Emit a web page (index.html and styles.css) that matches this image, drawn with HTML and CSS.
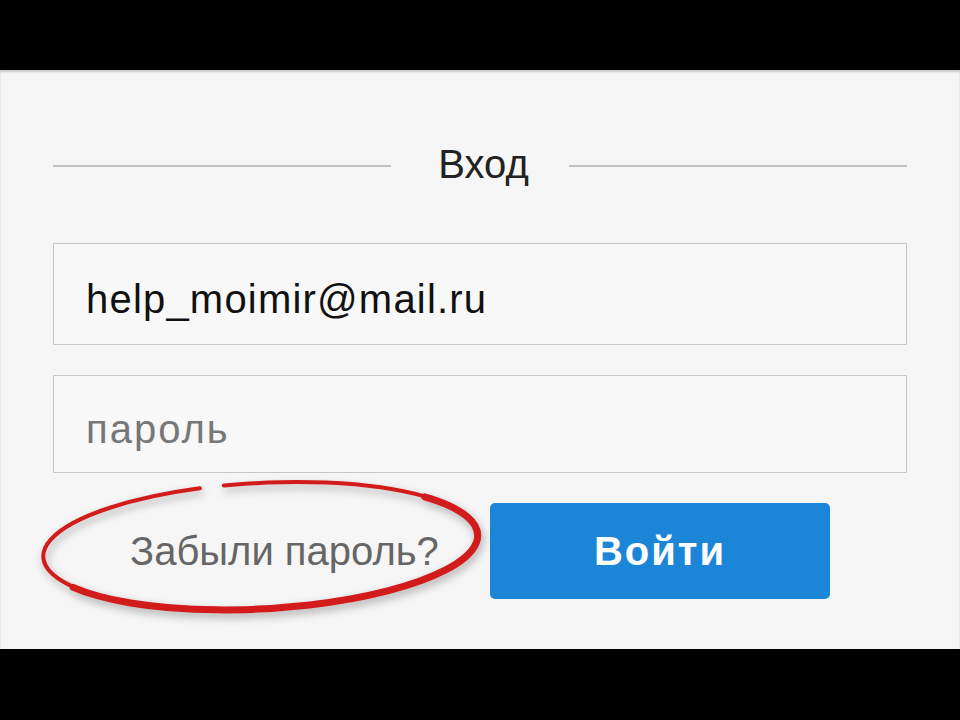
FILE: index.html
```html
<!DOCTYPE html>
<html lang="ru">

<head>
    <meta charset="utf-8">
    <link rel="stylesheet" href="styles.css">
</head>

<body>
    <div class="letterbox"></div>
    <main class="panel">
        <!-- Title with lines on both sides -->
        <div class="title-row">
            <span class="title-line"></span>
            <h1 class="title">Вход</h1>
            <span class="title-line"></span>
        </div>
        <form class="login-form">
            <input class="field field-mail" type="text" value="help_moimir@mail.ru" />
            <input class="field field-pass" type="password" placeholder="пароль" />
            <div class="actions">
                <div class="forgot">
                    <a class="forgot-link" href="#">Забыли пароль?</a>
                    <!-- red marker circle drawn over the link -->
                    <svg class="marker" width="470" height="160" viewBox="0 0 470 160">
                        <g transform="rotate(-3 230 76)" fill="none" stroke="#d21c1c" stroke-linecap="round">
                            <path d="M 197 13.7 A 218 63 0 1 1 173 15.2" stroke-width="4" />
                            <path d="M 397 35.5 A 218 63 0 1 1 41.2 107.5" stroke-width="7" />
                        </g>
                    </svg>
                </div>
                <button class="login-btn" type="button">Войти</button>
            </div>
        </form>
    </main>
    <div class="letterbox"></div>
</body>

</html>
```

FILE: styles.css
```css
body {
    margin: 0;
    background: #000;
    font-family: "Liberation Sans", Arial, sans-serif;
    overflow: hidden;
}

.letterbox {
    height: 70px;
    background: #000;
}

.panel {
    height: 579px;
    box-sizing: border-box;
    padding: 74px 53px 0 53px;
    background: #f7f6f6;
    box-shadow: inset 0 2px 2px rgba(0, 0, 0, 0.18);
}

.title-row {
    display: flex;
    align-items: center;
    height: 40px;
}

.title-line {
    flex: 1;
    height: 2px;
    margin-top: 4px;
    background: #c2c2c2;
}

.title {
    margin: 0 40px 0 47px;
    font-size: 40px;
    font-weight: normal;
    line-height: 40px;
    color: #222;
}

.login-form {
    display: flex;
    flex-direction: column;
    gap: 30px;
    margin-top: 59px;
}

.field {
    display: block;
    width: 100%;
    height: 102px;
    box-sizing: border-box;
    margin: 0;
    padding: 10px 0 0 32px;
    border: 1px solid #c6c6c6;
    border-radius: 0;
    background: #f8f8f8;
    font-family: inherit;
    font-size: 40px;
    color: #111;
    outline: none;
}

.field-mail {
    letter-spacing: 1.2px;
}

.field-pass {
    height: 98px;
}

.field::placeholder {
    color: #777;
    letter-spacing: 2px;
}

.actions {
    display: flex;
    align-items: stretch;
    height: 96px;
}

.forgot {
    position: relative;
    width: 437px;
    display: flex;
    align-items: center;
}

.forgot-link {
    padding-left: 77px;
    font-size: 40px;
    line-height: 40px;
    color: #666;
    text-decoration: none;
}

.marker {
    position: absolute;
    left: -23px;
    top: -33px;
    filter: drop-shadow(2px 4px 4px rgba(0, 0, 0, 0.3));
    pointer-events: none;
}

.login-btn {
    width: 340px;
    border: none;
    border-radius: 5px;
    background: #1b86d8;
    color: #fff;
    font-family: inherit;
    font-size: 40px;
    font-weight: bold;
    letter-spacing: 2px;
    cursor: pointer;
}
```
